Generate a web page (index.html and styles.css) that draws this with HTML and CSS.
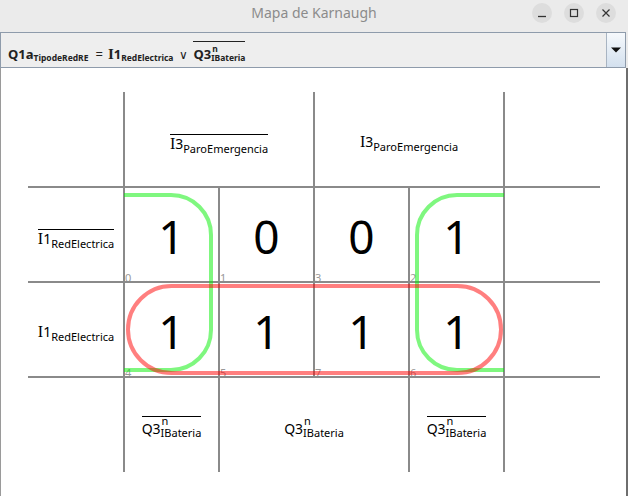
FILE: index.html
```html
<!DOCTYPE html>
<html>
<head>
<meta charset="utf-8">
<link rel="stylesheet" href="styles.css">
</head>
<body>
<div class="window">
  <div class="titlebar">
    <div class="title">Mapa de Karnaugh</div>
    <div class="wbtns">
      <div class="wbtn"><svg width="10" height="10" viewBox="0 0 10 10"><path d="M1 8.5H9" stroke="#333" stroke-width="1.3"/></svg></div>
      <div class="wbtn"><svg width="10" height="10" viewBox="0 0 10 10"><rect x="1.5" y="1.5" width="7" height="7" fill="none" stroke="#333" stroke-width="1.2"/></svg></div>
      <div class="wbtn"><svg width="10" height="10" viewBox="0 0 10 10"><path d="M1.5 1.5L8.5 8.5M8.5 1.5L1.5 8.5" stroke="#333" stroke-width="1.2"/></svg></div>
    </div>
  </div>
  <div class="combo">
    <div class="combo-text">
      <span class="m">Q1a</span><span class="s">TipodeRedRE</span>
      <span class="op">=</span>
      <span class="m"><span class="ii">I</span>1</span><span class="s">RedElectrica</span>
      <span class="op or">∨</span>
      <span class="ob"><span class="m">Q3</span><span class="ss"><span class="sup">n</span><span class="sb">IBateria</span></span></span>
    </div>
    <div class="combo-btn"><svg width="12" height="8" viewBox="0 0 12 8"><path d="M1 1.5H11L6 6.5Z" fill="#111"/></svg></div>
  </div>
  <div class="content">
    <div class="kmap">
      <div class="cell"></div>
      <div class="cell span2"><span class="lbl over"><span class="ii">I</span>3<span class="sub">ParoEmergencia</span></span></div>
      <div class="cell span2"><span class="lbl plain"><span class="ii">I</span>3<span class="sub">ParoEmergencia</span></span></div>
      <div class="cell"></div>

      <div class="cell"><span class="lbl over"><span class="ii">I</span>1<span class="sub">RedElectrica</span></span></div>
      <div class="cell val">1<span class="idx">0</span></div>
      <div class="cell val">0<span class="idx">1</span></div>
      <div class="cell val">0<span class="idx">3</span></div>
      <div class="cell val">1<span class="idx">2</span></div>
      <div class="cell"></div>

      <div class="cell"><span class="lbl plain"><span class="ii">I</span>1<span class="sub">RedElectrica</span></span></div>
      <div class="cell val">1<span class="idx">4</span></div>
      <div class="cell val">1<span class="idx">5</span></div>
      <div class="cell val">1<span class="idx">7</span></div>
      <div class="cell val">1<span class="idx">6</span></div>
      <div class="cell"></div>

      <div class="cell"></div>
      <div class="cell"><span class="lbl q over">Q3<span class="ss"><span class="sup">n</span><span class="sb">IBateria</span></span></span></div>
      <div class="cell span2"><span class="lbl q">Q3<span class="ss"><span class="sup">n</span><span class="sb">IBateria</span></span></span></div>
      <div class="cell"><span class="lbl q over">Q3<span class="ss"><span class="sup">n</span><span class="sb">IBateria</span></span></span></div>
      <div class="cell"></div>

      <svg class="lines" width="572" height="380" viewBox="0 0 572 380">
        <g stroke="#8a8a8a" stroke-width="2" fill="none">
          <path d="M0 95H572M0 190H572M0 285H572"/>
          <path d="M96 0V380M476 0V380M286 0V285M191 95V380M381 95V380"/>
        </g>
        <g fill="none" stroke-width="4">
          <path d="M96 103H143A40 40 0 0 1 183 143V238A40 40 0 0 1 143 278H96" stroke="rgba(0,240,0,0.5)"/>
          <path d="M476 103H429A40 40 0 0 0 389 143V238A40 40 0 0 0 429 278H476" stroke="rgba(0,240,0,0.5)"/>
          <rect x="100" y="194" width="373" height="87" rx="43.5" stroke="rgba(255,0,0,0.5)"/>
        </g>
      </svg>
    </div>
  </div>
</div>
</body>
</html>
```

FILE: styles.css
```css
* { box-sizing: border-box; }
html, body { margin: 0; padding: 0; background: #fff; }
body { width: 628px; height: 496px; overflow: hidden; font-family: "Noto Sans", "Open Sans", sans-serif; }

.window { width: 628px; height: 496px; display: flex; flex-direction: column; background: #ebebeb; }

.titlebar { height: 32px; flex: 0 0 32px; position: relative; display: flex; align-items: center; justify-content: center; background: #ebebeb; }
.title { font-size: 14px; color: #8b8b8b; margin-top: -7px; }
.wbtns { position: absolute; right: 12px; top: 3px; display: flex; gap: 12px; }
.wbtn { width: 20px; height: 20px; border-radius: 50%; background: #dddddd; display: flex; align-items: center; justify-content: center; }

.combo { height: 36px; flex: 0 0 36px; display: flex; align-items: stretch; border: 1px solid #8e9bab; margin-right: 2px; background: #eeeeee; }
.combo-text { flex: 1 1 auto; min-width: 0; overflow: hidden; display: flex; align-items: baseline; padding-left: 7px; padding-top: 12px; font-weight: bold; font-size: 13px; color: #222; white-space: nowrap; line-height: 1.2; }
.combo-text .s { font-size: 8.5px; position: relative; top: 2px; }
.combo-text .op { margin: 0 5px 0 7px; font-weight: normal; }
.combo-text .op.or { margin: 0 5px 0 6px; font-size: 12px; }
.combo-text .ii { font-family: "Liberation Serif", serif; font-weight: bold; font-size: 15px; }
.combo-text .ob { border-top: 1px solid #222; padding-top: 5px; margin-top: -6px; display: inline-flex; align-items: baseline; }
.combo-text .ss { font-size: 8.5px; line-height: 1; }
.combo-text .sup { top: -7px; left: 1px; }
.combo-text .sb { top: 2px; }
.combo-btn { flex: 0 0 19px; width: 19px; border-left: 1px solid #a8b4c2; background: linear-gradient(#f6f9fc, #d3e0ee); display: flex; align-items: center; justify-content: center; }

.content { flex: 1; background: #fff; border-left: 1px solid #9a9a9a; border-right: 2px solid #6e6e6e; padding: 24px 0 0 27px; }

.kmap { position: relative; display: grid; grid-template-columns: 96px 95px 95px 95px 95px 96px; grid-template-rows: 95px 95px 95px 95px; width: 572px; }
.lines { position: absolute; left: 0; top: 0; pointer-events: none; }

.cell { position: relative; display: flex; align-items: center; justify-content: center; color: #000; }
.span2 { grid-column: span 2; }
.val { font-size: 46px; line-height: 1; padding-top: 2px; }
.idx { position: absolute; left: 1px; bottom: -1px; font-size: 11px; line-height: 1; color: #999; }

.lbl { font-size: 14px; line-height: 1; display: inline-flex; align-items: baseline; white-space: nowrap; border-top: 1px solid transparent; padding-top: 1px; margin-top: 6px; }
.lbl.plain { margin-top: 2px; }
.lbl.q { padding-top: 5px; margin-top: 3px; }
.over { border-top-color: #000; }
.sub { font-size: 11px; position: relative; top: 4px; }
.ii { font-family: "Liberation Serif", serif; font-size: 16px; }

.ss { display: inline-block; position: relative; font-size: 11px; line-height: 1; }
.sb { position: relative; top: 3px; }
.sup { position: absolute; left: 1px; top: -9px; }
```
